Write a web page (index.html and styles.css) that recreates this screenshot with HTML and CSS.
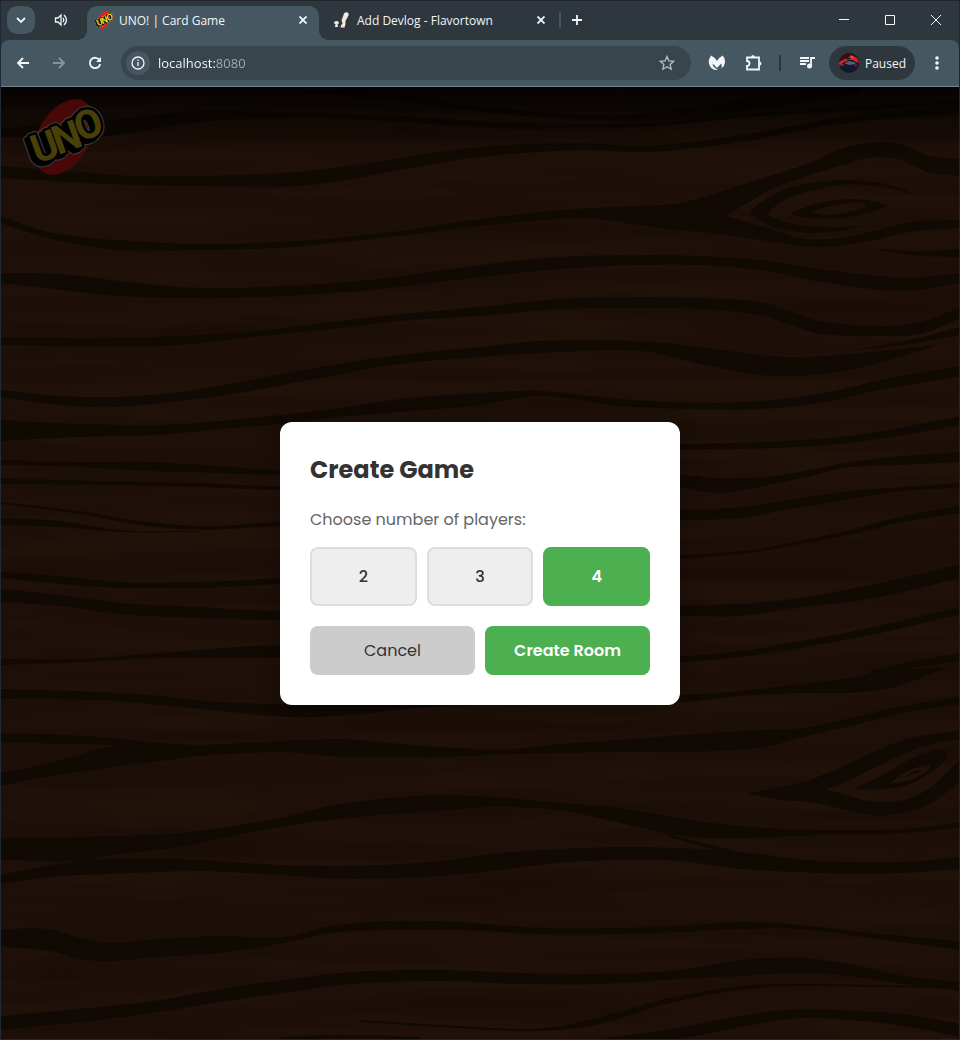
FILE: index.html
```html
<!DOCTYPE html>
<html lang="en">
<head>
    <meta charset="UTF-8">
    <meta name="viewport" content="width=device-width, initial-scale=1.0">
    <title>UNO! | Card Game</title>
    <link rel="stylesheet" href="styles.css">
</head>
<body>
    <div class="window">
        <header class="tab-strip">
            <button class="tab-search" aria-label="Search tabs">
                <svg width="12" height="12" viewBox="0 0 12 12"><path d="M2 4l4 4 4-4" class="line bold"/></svg>
            </button>
            <button class="sound" aria-label="Mute tab">
                <svg width="14" height="14" viewBox="0 0 14 14">
                    <path d="M1.500 5h2.500l3-3v10l-3-3h-2.500z" class="line"/>
                    <path d="M9 5q1.500 2 0 4M10 2q5 5 0 10" class="line"/>
                </svg>
            </button>
            <div class="tab active">
                <svg class="favicon" width="18" height="18" viewBox="0 0 78 78"><use href="#uno-logo"/></svg>
                <span class="tab-title">UNO! | Card Game</span>
                <button class="tab-close" aria-label="Close tab">
                    <svg width="8" height="8" viewBox="0 0 8 8"><path d="M0.500 0.500l7 7M7.500 0.500l-7 7" class="line bold"/></svg>
                </button>
            </div>
            <div class="tab">
                <svg class="favicon" width="18" height="18" viewBox="0 0 18 18">
                    <path d="M11 2.500q1.500-2 3.500-1t1 3l-3 5.500 0 3-1 3.500h-4l.5-2 1.500-2-1-3z" fill="#f2e8dd"/>
                    <path d="M1 12.500q0-2.500 2.500-2.500t2.500 2.500l-1.500.5.5 3h-3l.5-3z" fill="#f2e8dd"/>
                </svg>
                <span class="tab-title">Add Devlog - Flavortown</span>
                <button class="tab-close" aria-label="Close tab">
                    <svg width="8" height="8" viewBox="0 0 8 8"><path d="M0.500 0.500l7 7M7.500 0.500l-7 7" class="line bold"/></svg>
                </button>
            </div>
            <span class="tab-divider"></span>
            <button class="new-tab" aria-label="New tab">
                <svg width="10" height="10" viewBox="0 0 10 10"><path d="M5 0v10M0 5h10" class="line bold"/></svg>
            </button>
            <div class="window-controls">
                <button aria-label="Minimize">
                    <svg width="10" height="10" viewBox="0 0 10 10"><path d="M0 4.500h10" class="line thin"/></svg>
                </button>
                <button aria-label="Maximize">
                    <svg width="10" height="10" viewBox="0 0 10 10"><path d="M0.500 0.500h9v9h-9z" class="line thin"/></svg>
                </button>
                <button aria-label="Close">
                    <svg width="10" height="10" viewBox="0 0 10 10"><path d="M0 0l10 10M10 0l-10 10" class="line thin"/></svg>
                </button>
            </div>
        </header>

        <nav class="toolbar">
            <button class="tool" aria-label="Back">
                <svg width="14" height="14" viewBox="0 0 14 14"><path d="M13 7H2M7 2L2 7l5 5" class="line bold"/></svg>
            </button>
            <button class="tool faded" aria-label="Forward">
                <svg width="14" height="14" viewBox="0 0 14 14"><path d="M1 7h11M7 2l5 5-5 5" class="line bold"/></svg>
            </button>
            <button class="tool" aria-label="Reload">
                <svg width="14" height="14" viewBox="0 0 14 14">
                    <path d="M11.500 4.200a5.200 5.200 0 1 0 .7 3.800" class="line bold"/>
                    <path d="M13 1v5H8z" fill="currentColor"/>
                </svg>
            </button>
            <div class="address-bar">
                <button class="site-info" aria-label="Site information">
                    <svg width="14" height="14" viewBox="0 0 14 14">
                        <circle cx="7" cy="7" r="6" class="line"/>
                        <path d="M7 6v4M7 3.500v1.500" class="line"/>
                    </svg>
                </button>
                <input class="address" type="text" value="localhost:8080" aria-label="Address">
                <button class="bookmark" aria-label="Bookmark this page">
                    <svg width="16" height="16" viewBox="0 0 16 16"><path d="M8 1.500l1.900 4.400 4.800.4-3.600 3.200 1.100 4.700L8 11.700l-4.200 2.500 1.100-4.700L1.300 6.300l4.800-.4z" class="line"/></svg>
                </button>
            </div>
            <button class="tool" aria-label="Malware protection">
                <svg width="18" height="18" viewBox="0 0 18 18">
                    <path d="M3 1.500Q6.500 3 9 7 11.500 3 14.800 1.500 17.500 5 17 8.500 16.500 12 13.500 14.500 14 11.500 13.300 9.500q-2 2-4.300 4.500Q6.700 11.500 4.700 9.500 4.200 12 7 14l3 2Q5 16.500 2.500 13 0 9 1 5.500z" fill="currentColor"/>
                </svg>
            </button>
            <button class="tool" aria-label="Extensions">
                <svg width="20" height="20" viewBox="0 0 20 20">
                    <path d="M4 4.500h12v12H4v-3.500a2.500 2.500 0 0 0 0-5z" class="line bold"/>
                    <path d="M8 4.500a2 2.500 0 0 1 4 0zM16.500 8.500a2 2 0 0 1 0 4z" fill="currentColor"/>
                </svg>
            </button>
            <span class="tool-divider"></span>
            <button class="tool" aria-label="Media controls">
                <svg width="18" height="18" viewBox="0 0 18 18">
                    <path d="M2 4h9M2 7h9M2 10h6" class="line bold"/>
                    <path d="M13 12V4h4" class="line bold"/>
                    <circle cx="11.500" cy="12" r="2.500" fill="currentColor"/>
                </svg>
            </button>
            <button class="profile">
                <svg width="20" height="20" viewBox="0 0 20 20">
                    <defs><clipPath id="avatar"><circle cx="10" cy="10" r="10"/></clipPath></defs>
                    <g clip-path="url(#avatar)">
                        <path d="M0 0h20v20H0z" fill="#12182e"/>
                        <path d="M0 0h20v10l-4-3-6-1-6 2-4 4z" fill="#3b0c14"/>
                        <path d="M0 9l6-3 3-1 3-3 2 1 4 2 2 5-3-1-3-2-4 0-5 2-5 4z" fill="#c92d1f"/>
                        <path d="M8 5l3 0 1 1-4 1z" fill="#12182e"/>
                        <path d="M5 10l5-2 5 1 2 2-7 1z" fill="#565c74"/>
                        <path d="M1 11l3 0 1 2-3 0zM15 12l3-1-1 3z" fill="#a3222a"/>
                        <path d="M12 3l3 1-2 1z" fill="#ff7a3c"/>
                    </g>
                </svg>
                Paused
            </button>
            <button class="tool menu" aria-label="Menu">
                <svg width="4" height="16" viewBox="0 0 4 16">
                    <circle cx="2" cy="3" r="1.800" fill="currentColor"/>
                    <circle cx="2" cy="8" r="1.800" fill="currentColor"/>
                    <circle cx="2" cy="13" r="1.800" fill="currentColor"/>
                </svg>
            </button>
        </nav>

        <main class="table">
            <svg class="wood" viewBox="1 87 958 952" preserveAspectRatio="xMidYMid slice" aria-hidden="true">
                <defs>
                    <filter id="fibres" x="0" y="0" width="100%" height="100%" color-interpolation-filters="sRGB">
                        <feTurbulence type="fractalNoise" baseFrequency="0.003 0.05" numOctaves="3" seed="8"/>
                        <feColorMatrix values="0 0 0 0 0.270  0 0 0 0 0.130  0 0 0 0 0.050  1 0 0 0 -0.300"/>
                    </filter>
                </defs>
                <rect x="0" y="86" width="960" height="954" fill="#6c3c20"/>
                <rect x="0" y="86" width="960" height="954" filter="url(#fibres)"/>
                <g id="grain" fill="#3a1f0e"></g>
                <!-- knots -->
                <g fill="#3a1f0e">
                    <path d="M917 196C890 180 840 173 785 189Q755 202 750 214Q768 231 813 233Q840 232 863 226Q790 231 768 214Q780 193 847 184Q885 184 917 196Z"/>
                    <path fill-rule="evenodd" d="M790 214Q820 198 857 199Q876 200 889 206Q860 218 830 219Q805 219 790 214ZM812 212Q835 202 860 203Q870 205 864 208Q840 216 822 215Z"/>
                    <path fill-rule="evenodd" d="M853 789Q880 778 903 763Q930 749 945 750Q954 755 937 768Q918 783 900 787Q880 791 853 789ZM889 784Q910 766 930 765Q930 773 908 781Z"/>
                    <path d="M902 778L917 770L922 771Z"/>
                </g>
            </svg>
            <div class="top-bar">
                <svg class="logo" width="78" height="78" viewBox="0 0 78 78" role="img" aria-label="UNO">
                    <g id="uno-logo">
                        <ellipse cx="39" cy="39" rx="41" ry="26" transform="rotate(-60 39 39)" fill="#f01c1c"/>
                        <use href="#letters" class="logo-outline" x="-3" y="3"/>
                        <use href="#letters" class="logo-outline"/>
                        <use href="#letters" class="logo-shadow" x="-3" y="3"/>
                        <use href="#letters" class="logo-shadow"/>
                        <g class="logo-face">
                            <g id="letters">
                                <text x="12" y="66" transform="rotate(-20 12 66)">U</text>
                                <text x="33" y="57" transform="rotate(-20 33 57)">N</text>
                                <text x="55" y="44" transform="rotate(-20 55 44)">O</text>
                            </g>
                        </g>
                    </g>
                </svg>
            </div>
            <div class="overlay">
                <section class="modal" role="dialog" aria-labelledby="modal-title">
                    <h2 id="modal-title">Create Game</h2>
                    <p id="players-label">Choose number of players:</p>
                    <div class="player-options" role="group" aria-labelledby="players-label">
                        <button class="player-btn">2</button>
                        <button class="player-btn">3</button>
                        <button class="player-btn selected">4</button>
                    </div>
                    <div class="modal-actions">
                        <button class="cancel-btn">Cancel</button>
                        <button class="create-btn">Create Room</button>
                    </div>
                </section>
            </div>
        </main>
    </div>

    <script src="script.js"></script>
</body>
</html>
```

FILE: styles.css
```css
:root {
    --strip: #2d373d;
    --toolbar: #455760;
    --field: #38454c;
    --chrome-text: #f2f6f8;
    --green: #4caf50;
}

* {
    box-sizing: border-box;
}

body {
    margin: 0;
    font-family: 'Open Sans', 'Segoe UI', sans-serif;
    font-size: 12px;
}

button {
    display: flex;
    align-items: center;
    justify-content: center;
    padding: 0;
    border: none;
    background: none;
    color: inherit;
    font-family: inherit;
    cursor: pointer;
}

svg {
    display: block;
    flex: none;
}

.line {
    fill: none;
    stroke: currentColor;
    stroke-width: 1.3;
}

.line.bold {
    stroke-width: 1.8;
}

.line.thin {
    stroke-width: 1;
}

.window {
    display: flex;
    flex-direction: column;
    min-height: 100vh;
    border: 1px solid #22262b;
    border-left-color: #1f2937;
    background-color: var(--strip);
    color: var(--chrome-text);
}

/* tabs */
.tab-strip {
    display: flex;
    align-items: center;
    height: 39px;
    padding: 5px 0 0 6px;
}

.tab-search {
    width: 28px;
    height: 28px;
    margin-bottom: 6px;
    border-radius: 10px;
    background-color: var(--toolbar);
}

.sound {
    width: 28px;
    height: 28px;
    margin: 0 12px 6px;
}

.tab {
    position: relative;
    display: flex;
    align-items: center;
    width: 232px;
    height: 34px;
    padding: 0 12px 6px 8px;
}

.tab + .tab {
    width: 240px;
    padding: 0 14px 6px;
}

.tab.active {
    border-radius: 10px 10px 0 0;
    background-color: var(--toolbar);
}

.tab.active::before,
.tab.active::after {
    content: "";
    position: absolute;
    bottom: 0;
    width: 10px;
    height: 10px;
}

.tab.active::before {
    right: 100%;
    background: radial-gradient(circle at 0 0, transparent 10px, var(--toolbar) 10px);
}

.tab.active::after {
    left: 100%;
    background: radial-gradient(circle at 100% 0, transparent 10px, var(--toolbar) 10px);
}

.favicon {
    margin-right: 6px;
}

.tab-title {
    flex: 1;
    white-space: nowrap;
}

.tab-close {
    width: 8px;
    height: 16px;
}

.tab-divider {
    width: 2px;
    height: 16px;
    margin-bottom: 6px;
    background-color: var(--toolbar);
}

.new-tab {
    width: 32px;
    height: 28px;
    margin-bottom: 6px;
}

.window-controls {
    display: flex;
    margin-left: auto;
}

.window-controls button {
    width: 46px;
    height: 28px;
    margin-bottom: 6px;
}

/* toolbar */
.toolbar {
    display: flex;
    align-items: center;
    height: 47px;
    padding: 0 4px;
    border-bottom: 1px solid #71868f;
    border-radius: 8px 8px 0 0;
    background-color: var(--toolbar);
}

.tool {
    width: 36px;
    height: 34px;
}

.tool.faded {
    color: #87949b;
}

.address-bar {
    display: flex;
    flex: 1;
    align-items: center;
    height: 34px;
    margin: 0 8px;
    padding: 0 15px 0 5px;
    border-radius: 17px;
    background-color: var(--field);
}

.site-info {
    width: 24px;
    height: 24px;
    margin-right: 8px;
    border-radius: 50%;
    background-color: var(--toolbar);
}

/* the host is bright, the port is dimmed */
.address {
    flex: 1;
    min-width: 0;
    padding: 0;
    border: none;
    outline: none;
    background: linear-gradient(90deg, #fff 57px, #a3adb2 57px);
    background-clip: text;
    -webkit-background-clip: text;
    color: transparent;
    font-family: inherit;
    font-size: 13px;
    line-height: 20px;
}

.bookmark {
    width: 18px;
    height: 24px;
    color: #b9c0c4;
}

.tool-divider {
    width: 2px;
    height: 16px;
    margin: 0 8px;
    background-color: var(--strip);
}

.profile {
    gap: 6px;
    height: 34px;
    margin-left: 4px;
    padding: 0 9px 0 10px;
    border-radius: 17px;
    background-color: var(--strip);
    font-size: 12px;
}

.tool.menu {
    margin-left: 4px;
}

/* game table */
.table {
    position: relative;
    display: flex;
    flex: 1;
    flex-direction: column;
    overflow: hidden;
    background-color: #6c3c20;
    color: #333;
    font-family: 'Poppins', 'Inter', sans-serif;
    font-size: 16px;
}

.wood {
    position: absolute;
    inset: 0;
    width: 100%;
    height: 100%;
}

.top-bar {
    position: relative;
    padding: 11px 24px;
    background: linear-gradient(rgba(0, 0, 0, 0.8), transparent 72px);
}

.logo {
    overflow: visible;
}

.logo-outline,
.logo-shadow,
.logo-face {
    font-family: 'Liberation Sans Narrow', 'Roboto', sans-serif;
    font-size: 40px;
    font-weight: 700;
    stroke-linejoin: round;
}

.logo-outline {
    fill: #ccc;
    stroke: #ccc;
    stroke-width: 7px;
}

.logo-shadow {
    fill: #000;
    stroke: #000;
    stroke-width: 5px;
}

.logo-face {
    fill: #f0d51e;
}

.overlay {
    position: absolute;
    inset: 0;
    display: flex;
    align-items: center;
    justify-content: center;
    background-color: rgba(0, 0, 0, 0.7);
}

.modal {
    width: 400px;
    max-width: 90%;
    padding: 30px;
    border-radius: 12px;
    background-color: white;
    box-shadow: 0 4px 20px rgba(0, 0, 0, 0.3);
}

.modal h2 {
    margin: 0 0 20px;
    font-size: 24px;
    font-weight: 700;
    line-height: 36px;
}

.modal p {
    margin: 0 0 15px;
    color: #666;
    line-height: 24px;
}

.player-options,
.modal-actions {
    display: flex;
    gap: 10px;
}

.player-options {
    margin-bottom: 20px;
}

.player-btn {
    flex: 1;
    height: 59px;
    border: 2px solid #ddd;
    border-radius: 8px;
    background-color: #eee;
    font-size: 16px;
    font-weight: 500;
}

.player-btn.selected {
    border-color: var(--green);
    background-color: var(--green);
    color: white;
    font-weight: 600;
}

.cancel-btn,
.create-btn {
    flex: 1;
    height: 49px;
    border-radius: 8px;
    font-size: 16px;
}

.cancel-btn {
    background-color: #ccc;
}

.create-btn {
    background-color: var(--green);
    color: white;
    font-weight: 600;
}
```

FILE: script.js
```javascript
// dark wood bands, each point is [x, top, bottom]
const bands = [
    [[300, 90, 92], [400, 93, 101], [480, 106, 112], [613, 115, 121], [700, 106, 118], [780, 93, 106], [860, 88, 93]],
    [[0, 128, 137], [100, 121, 137], [200, 111, 122], [300, 113, 118], [400, 116, 122], [480, 121, 128], [580, 124, 129], [660, 122, 126], [740, 114, 118], [840, 108, 111], [960, 100, 104]],
    [[0, 166, 178], [70, 171, 182], [133, 176, 185], [200, 176, 186], [283, 173, 187], [333, 168, 182], [400, 158, 170], [480, 147, 157], [580, 143, 150], [650, 146, 152], [747, 134, 141], [847, 116, 123], [960, 106, 114]],
    [[0, 216, 223], [40, 230, 236], [80, 237, 245], [133, 241, 251], [200, 244, 250], [280, 242, 248], [333, 238, 243], [400, 231, 236], [480, 219, 226], [560, 210, 219], [613, 207, 219], [680, 203, 225], [722, 191, 217], [770, 176, 190], [810, 163, 175], [840, 149, 166], [870, 143, 158], [900, 144, 160], [930, 156, 173], [960, 159, 176]],
    [[600, 208, 219], [660, 206, 228], [720, 215, 234], [760, 226, 240], [800, 238, 246], [830, 239, 247], [870, 232, 241], [910, 222, 232], [960, 220, 228]],
    [[875, 249, 250], [920, 251, 256], [960, 249, 257]],
    [[0, 273, 283], [60, 274, 290], [120, 281, 296], [200, 288, 298], [283, 286, 296], [370, 280, 290], [480, 265, 277], [560, 257, 269], [640, 255, 265], [700, 256, 265], [760, 260, 270], [820, 269, 282], [880, 276, 290], [910, 278, 291], [960, 273, 283]],
    [[0, 337, 345], [100, 338, 347], [180, 336, 345], [260, 331, 336], [340, 321, 328], [400, 314, 321], [480, 307, 316], [560, 299, 309], [640, 297, 308], [700, 298, 309], [760, 302, 315], [790, 311, 325], [820, 321, 334], [880, 326, 336], [920, 322, 334], [960, 308, 318]],
    [[0, 390, 397], [60, 396, 405], [115, 397, 407], [180, 392, 401], [240, 382, 393], [320, 367, 378], [400, 355, 364], [480, 347, 357], [540, 341, 353], [640, 341, 351], [700, 347, 364], [760, 355, 375], [800, 357, 376], [850, 354, 370], [900, 349, 357], [935, 345, 346]],
    [[860, 349, 350], [910, 340, 344], [960, 327, 335]],
    [[0, 420, 441], [80, 424, 437], [160, 425, 435], [220, 421, 429], [290, 414, 423], [340, 408, 417], [400, 399, 412], [480, 393, 405], [540, 391, 396], [620, 399, 406], [700, 403, 409], [760, 401, 409], [820, 394, 403], [880, 380, 390], [960, 366, 376]],
    [[0, 460, 465], [80, 462, 467], [150, 462, 471], [220, 466, 473], [280, 470, 475], [480, 458, 464], [680, 444, 450], [740, 443, 449], [800, 440, 447], [850, 436, 443], [903, 427, 435], [960, 416, 425]],
    [[0, 478, 484], [100, 481, 485], [200, 483, 487], [280, 486, 490], [480, 480, 488], [650, 472, 484], [715, 478, 493], [740, 478, 491], [770, 477, 485], [810, 470, 476], [850, 462, 467], [903, 456, 465], [960, 452, 462]],
    [[0, 502, 504], [80, 511, 514], [133, 520, 524], [200, 526, 530], [280, 522, 526], [480, 515, 522], [680, 510, 520], [740, 507, 518], [790, 500, 509], [850, 491, 499], [903, 487, 491], [960, 483, 488]],
    [[0, 518, 525], [60, 521, 527], [120, 530, 532], [200, 531, 532]],
    [[0, 572, 578], [60, 576, 584], [120, 582, 588], [200, 582, 588], [280, 578, 584], [480, 566, 572], [680, 555, 559], [750, 550, 553], [800, 541, 544], [850, 530, 535], [903, 516, 522], [960, 506, 513]],
    [[0, 589, 602], [60, 595, 606], [120, 603, 614], [200, 607, 618], [280, 611, 620], [480, 608, 618], [680, 605, 616], [740, 604, 616], [800, 598, 607], [850, 589, 602], [903, 578, 592], [960, 564, 578]],
    [[0, 659, 665], [80, 659, 662], [160, 653, 658], [280, 645, 658], [480, 650, 658], [680, 656, 662], [740, 651, 657], [800, 641, 648], [850, 632, 639], [903, 620, 628], [960, 607, 614]],
    [[0, 689, 699], [100, 692, 700], [160, 696, 705], [220, 702, 711], [290, 704, 717], [350, 704, 715], [430, 700, 707], [560, 698, 703], [680, 695, 702], [740, 691, 696], [800, 684, 693], [850, 678, 693], [890, 668, 688], [915, 669, 680], [945, 667, 668]],
    [[870, 671, 674], [910, 662, 668], [960, 653, 661]],
    [[0, 733, 742], [67, 735, 744], [110, 738, 745], [160, 743, 750]],
    [[0, 773, 786], [50, 763, 776], [100, 749, 769], [127, 744, 765], [160, 743, 761], [200, 745, 756], [280, 741, 752], [340, 739, 757], [390, 743, 757], [440, 747, 757], [510, 749, 754], [560, 744, 753], [620, 740, 752], [680, 735, 752], [760, 730, 748], [803, 728, 737], [850, 718, 726], [903, 706, 713], [960, 696, 704]],
    [[748, 793, 794], [800, 783, 801], [825, 774, 790], [850, 763, 780], [880, 749, 765], [910, 738, 751], [940, 733, 742], [960, 731, 740]],
    [[770, 790, 797], [820, 789, 804], [870, 801, 815], [903, 800, 813], [930, 788, 804], [960, 759, 782]],
    [[0, 838, 860], [80, 837, 861], [120, 836, 854], [180, 833, 847], [233, 826, 836], [285, 817, 826], [330, 806, 820], [380, 799, 815], [440, 795, 811], [490, 797, 807], [560, 803, 810], [620, 808, 823], [680, 818, 836], [740, 826, 838], [820, 830, 835], [903, 829, 833], [960, 822, 828]],
    [[0, 875, 884], [50, 865, 877], [80, 861, 875], [130, 858, 873], [200, 860, 871], [280, 865, 875], [350, 866, 879], [440, 861, 876], [500, 853, 870], [560, 849, 863], [620, 847, 860], [680, 848, 861], [740, 852, 869], [820, 861, 873], [903, 862, 873], [960, 857, 869]],
    [[670, 835, 837], [700, 842, 846], [740, 852, 856]],
    [[0, 929, 947], [50, 929, 951], [80, 938, 959], [110, 943, 961], [160, 939, 957], [220, 936, 953], [285, 937, 943], [330, 926, 933], [390, 921, 930], [460, 922, 930], [540, 928, 934], [620, 928, 934], [680, 926, 932], [740, 922, 929], [800, 925, 929], [870, 933, 938], [960, 941, 950]],
    [[0, 1016, 1030], [100, 1007, 1020], [160, 1000, 1012], [220, 989, 1002], [285, 980, 993], [350, 972, 984], [440, 970, 981], [520, 973, 984], [600, 974, 984], [680, 970, 979], [740, 960, 976], [800, 958, 973], [850, 964, 976], [903, 976, 984], [960, 982, 991]],
    [[360, 1020, 1022], [440, 1025, 1027], [520, 1029, 1031], [560, 1026, 1030], [600, 1017, 1024], [670, 998, 1003], [740, 986, 990], [800, 984, 986], [930, 986, 988]],
    [[280, 1037, 1040], [350, 1035, 1038], [420, 1037, 1040]],
    [[600, 1039, 1040], [670, 1029, 1040], [740, 1016, 1027], [800, 1009, 1018], [850, 1011, 1020], [903, 1014, 1026], [960, 1024, 1037]]
];

// smooth curve through all the points
function curve(points) {
    let d = '';
    for (let i = 0; i < points.length - 1; i++) {
        const p0 = points[i - 1] || points[i];
        const p1 = points[i];
        const p2 = points[i + 1];
        const p3 = points[i + 2] || p2;
        const third = (p2[0] - p1[0]) / 3;
        const slope1 = (p2[1] - p0[1]) / (p2[0] - p0[0]);
        const slope2 = (p3[1] - p1[1]) / (p3[0] - p1[0]);
        const c1 = [p1[0] + third, p1[1] + slope1 * third];
        const c2 = [p2[0] - third, p2[1] - slope2 * third];
        d += 'C' + c1 + ' ' + c2 + ' ' + p2;
    }
    return d;
}

const grain = document.getElementById('grain');

bands.forEach(function(band) {
    const top = band.map(p => [p[0], p[1]]);
    const bottom = band.map(p => [p[0], p[2]]).reverse();
    const path = document.createElementNS('http://www.w3.org/2000/svg', 'path');
    path.setAttribute('d', 'M' + top[0] + curve(top) + 'L' + bottom[0] + curve(bottom) + 'Z');
    grain.appendChild(path);
});

const playerButtons = document.querySelectorAll('.player-btn');

playerButtons.forEach(function(button) {
    button.addEventListener('click', function() {
        playerButtons.forEach(b => b.classList.remove('selected'));
        button.classList.add('selected');
    });
});
```
